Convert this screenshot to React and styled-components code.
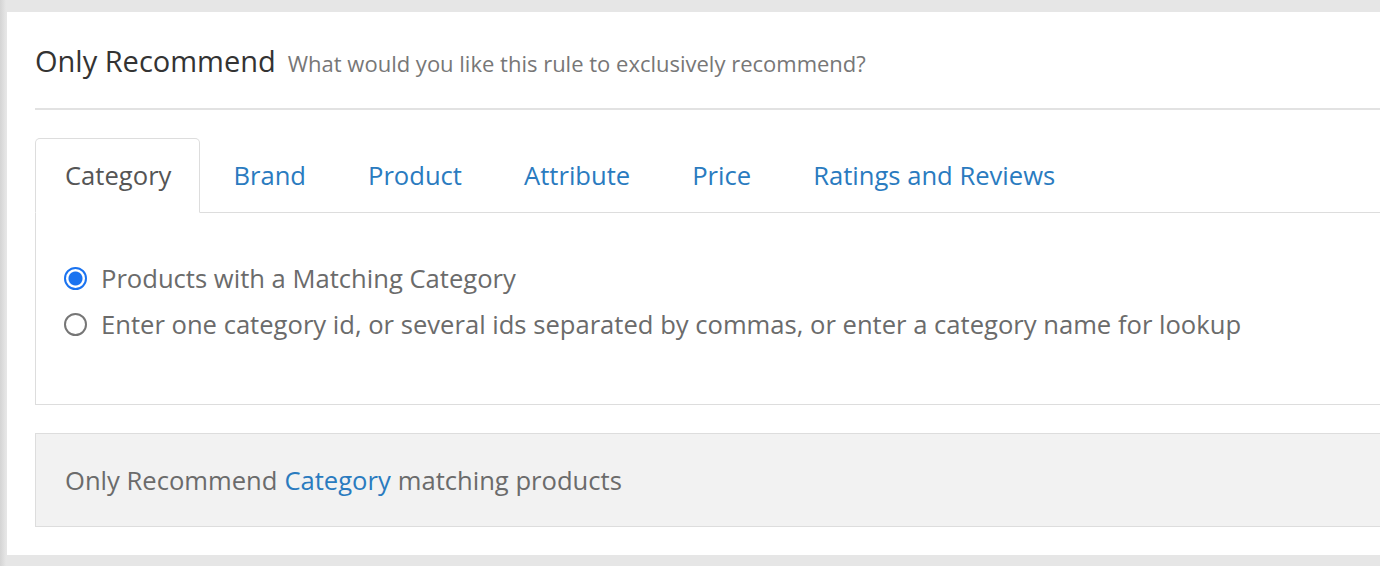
import React, { useState } from 'react';
import styled, { createGlobalStyle } from 'styled-components';

const GlobalStyle = createGlobalStyle`
  html, body {
    margin: 0;
    padding: 0;
    background: #e6e6e6;
    overflow: hidden;
  }
  body {
    font-family: "Open Sans", "Liberation Sans", Arial, sans-serif;
  }
`;

const Page = styled.div`
  padding: 12px 0 11px 7px;
  background: linear-gradient(to right, #d4d4d4 0, #e6e6e6 6px);
`;

// the card runs past the right edge of the window, so its right side is never seen
const Card = styled.section`
  background: #fff;
  margin-right: -40px;
  padding: 29px 0 28px 28px;
`;

const Header = styled.header`
  display: flex;
  align-items: baseline;
  gap: 12px;
  padding-bottom: 27px;
  border-bottom: 2px solid #e2e2e2;
`;

const Title = styled.h3`
  margin: 0;
  font-size: 29px;
  line-height: 40px;
  font-weight: 400;
  color: #333;
`;

const Subtitle = styled.small`
  font-size: 22px;
  color: #777;
`;

const TabList = styled.ul`
  display: flex;
  list-style: none;
  margin: 28px 0 0;
  padding: 0;
  border-bottom: 1px solid #ddd;
`;

const Tab = styled.li`
  box-sizing: border-box;
  height: 75px;
  margin: 0 3px -1px 0;
  padding: 0 28px 0 29px;
  display: flex;
  align-items: center;
  border: 1px solid transparent;
  border-radius: 5px 5px 0 0;
  font-size: 25.6px;
  cursor: pointer;
  color: ${p => (p.$active ? '#555' : '#2a7bbf')};
  background: ${p => (p.$active ? '#fff' : 'transparent')};
  border-color: ${p => (p.$active ? '#ddd #ddd transparent' : 'transparent')};
`;

const Panel = styled.div`
  border: 1px solid #ddd;
  border-top: none;
  padding: 42px 28px 57px;
`;

const RadioRow = styled.label`
  display: flex;
  align-items: center;
  gap: 14px;
  height: 46px;
  font-size: 25.6px;
  color: #6b6b6b;
  cursor: pointer;
`;

const RadioMark = styled.span`
  box-sizing: border-box;
  width: 23px;
  height: 23px;
  border-radius: 50%;
  flex-shrink: 0;
  border: ${p => (p.$checked ? '2px solid #1a73f0' : '2px solid #767676')};
  background: ${p =>
    p.$checked ? 'radial-gradient(circle, #1a73f0 0 6.5px, #fff 7.5px)' : '#fff'};
`;

const Summary = styled.div`
  margin-top: 28px;
  height: 94px;
  box-sizing: border-box;
  display: flex;
  align-items: center;
  padding: 0 29px;
  background: #f2f2f2;
  border: 1px solid #ddd;
  font-size: 25.6px;
  color: #6b6b6b;
`;

const Highlight = styled.span`
  color: #2a7bbf;
  margin: 0 0.27em;
`;

const tabs = ['Category', 'Brand', 'Product', 'Attribute', 'Price', 'Ratings and Reviews'];

const options = [
  'Products with a Matching Category',
  'Enter one category id, or several ids separated by commas, or enter a category name for lookup',
];

export default function App() {
  const [active, setActive] = useState('Category');
  const [choice, setChoice] = useState(0);

  return (
    <>
      <GlobalStyle />
      <Page>
        <Card>
          <Header>
            <Title>Only Recommend</Title>
            <Subtitle>What would you like this rule to exclusively recommend?</Subtitle>
          </Header>

          <TabList>
            {tabs.map(t => (
              <Tab key={t} $active={t === active} onClick={() => setActive(t)}>
                {t}
              </Tab>
            ))}
          </TabList>

          <Panel>
            {options.map((o, i) => (
              <RadioRow key={o} onClick={() => setChoice(i)}>
                <RadioMark $checked={choice === i} />
                {o}
              </RadioRow>
            ))}
          </Panel>

          <Summary>
            Only Recommend<Highlight>{active}</Highlight>matching products
          </Summary>
        </Card>
      </Page>
    </>
  );
}
